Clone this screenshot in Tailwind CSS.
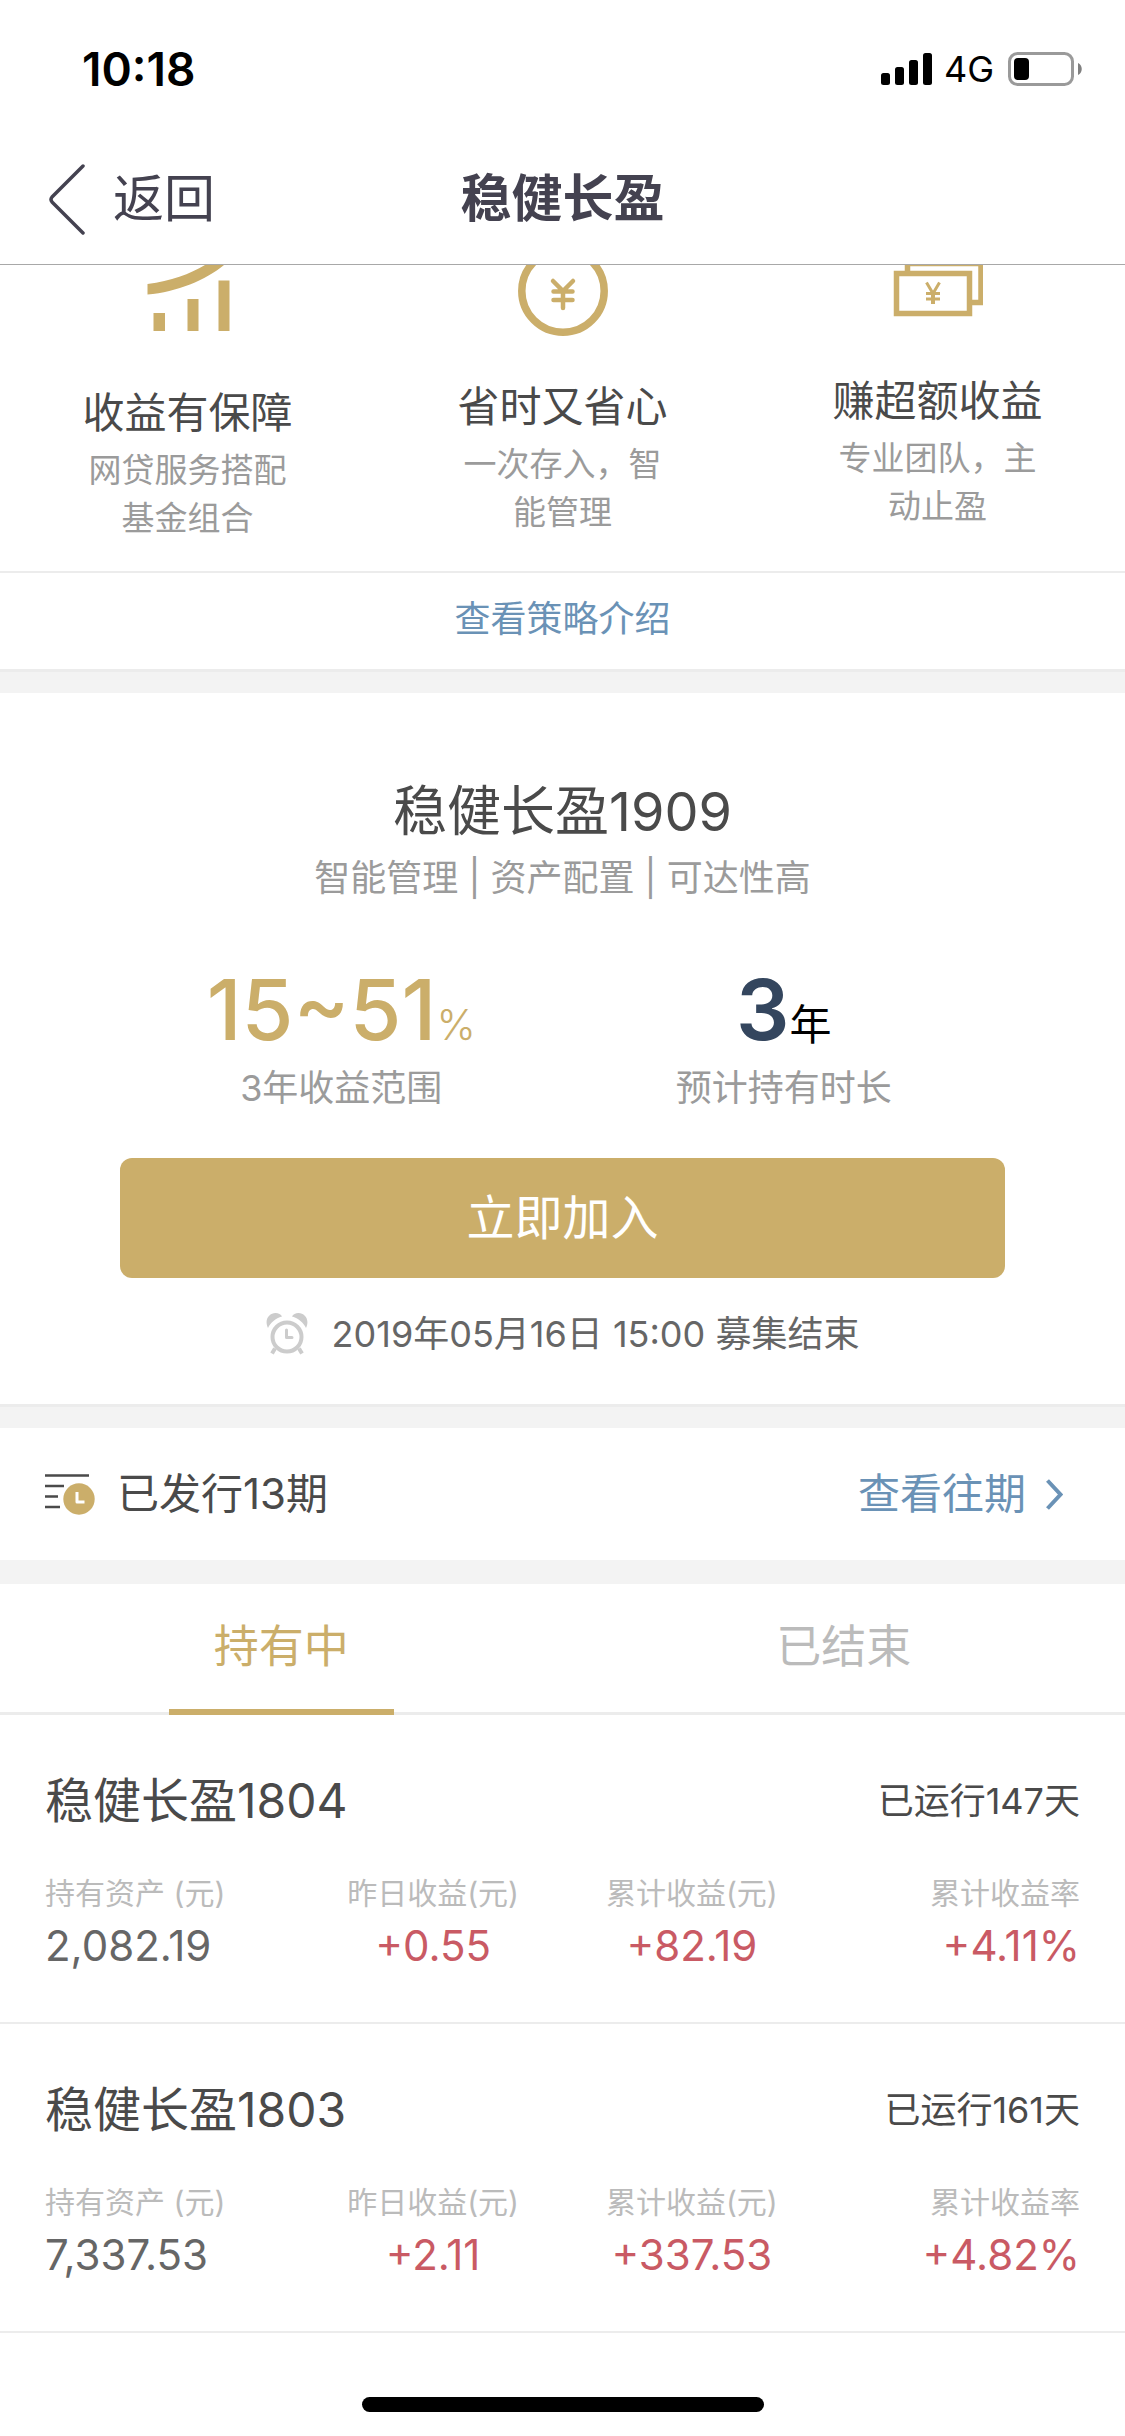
<!DOCTYPE html>
<html lang="zh-CN">
  <head>
    <meta charset="UTF-8" />
    <meta name="viewport" content="width=device-width, initial-scale=1.0" />
    <script src="https://cdn.jsdelivr.net/npm/@tailwindcss/browser@4"></script>
    <title>稳健长盈</title>
  </head>
  <body
    class="min-h-screen flex flex-col bg-white text-[#4a4a4a] font-['Inter','Noto_Sans_CJK_SC',sans-serif]"
  >
    <!-- Status bar -->
    <div class="flex items-center justify-between h-[132px] pt-1.5 pl-[82px] pr-[43px] text-black">
      <span class="text-[46px] leading-[60px] font-semibold">10:18</span>
      <div class="flex items-center">
        <svg class="w-[51px] h-8" viewBox="0 0 51 32" fill="currentColor">
          <rect x="0" y="20" width="9" height="12" rx="2.5" />
          <rect x="14" y="14" width="9" height="18" rx="2.5" />
          <rect x="28" y="7" width="9" height="25" rx="2.5" />
          <rect x="42" y="0" width="9" height="32" rx="2.5" />
        </svg>
        <span class="ml-3 text-[36px] leading-[60px]">4G</span>
        <svg class="ml-3.5 w-[74px] h-[34px]" viewBox="0 0 74 34">
          <rect x="1.5" y="1.5" width="63" height="31" rx="8" fill="none" stroke="#9a9a9a" stroke-width="3" />
          <rect x="6" y="6" width="15" height="22" rx="4" />
          <path d="M70 11c5 2 5 10 0 12z" fill="#808080" />
        </svg>
      </div>
    </div>

    <!-- Navigation bar -->
    <header
      class="grid grid-cols-3 items-center h-[133px] pt-0.5 px-12 border-b border-[#a8a8a8] text-[51px] leading-[72px] text-[#444250]"
    >
      <button type="button" class="flex items-center gap-7">
        <svg class="w-[37px] h-[71px]" viewBox="0 0 37 71" fill="none" stroke="currentColor" stroke-width="3.5" stroke-linecap="round" stroke-linejoin="round">
          <path d="M35 2 4 33q-2 2.500 0 5l31 31" />
        </svg>
        返回
      </button>
      <h1 class="text-center font-bold whitespace-nowrap">稳健长盈</h1>
    </header>

    <main>
      <!-- Selling points -->
      <section class="grid grid-cols-3 h-[308px] border-b-2 border-[#ececec] text-center">
        <div class="flex flex-col items-center">
          <svg class="w-[90px] h-[77px] mb-11" viewBox="0 0 90 77" fill="#cbae6a">
            <path d="M4.500 19C28 16 47 9 62 0h19C63 15 34 27 4.500 29.500z" />
            <path d="M10.500 48H22v18H10.500zM44.500 34h11v32h-11zM75.500 15.500h11V66h-11z" />
          </svg>
          <h2 class="text-[42px] leading-[54px] mb-1.5">收益有保障</h2>
          <p class="w-[200px] text-[33px] leading-[48px] text-[#9b9b9b]">网贷服务搭配基金组合</p>
        </div>
        <div class="flex flex-col items-center">
          <svg class="w-[90px] h-[71px] mb-11" viewBox="0 0 90 71" fill="none" stroke="#cbae6a">
            <circle cx="45" cy="26" r="41.200" stroke-width="7.500" />
            <path d="M35 16 45 26 55 16M35.500 26.500h19M35.500 35h19M45 26v17" stroke-width="4.500" stroke-linecap="round" />
          </svg>
          <h2 class="text-[42px] leading-[54px] mb-1.5">省时又省心</h2>
          <p class="w-[200px] text-[33px] leading-[48px] text-[#9b9b9b]">一次存入，智能管理</p>
        </div>
        <div class="flex flex-col items-center">
          <svg class="w-[90px] h-[65px] mb-11" viewBox="0 0 90 65" fill="none" stroke="#cbae6a">
            <path d="M3.500 8.500h73v40h-73zM14.500 6V-1.500H88V37.500H79" stroke-width="5.500" />
            <path d="m33.500 17.500 6.500 11 6.500-11M33 28.500h14M33 34h14" stroke-width="3" />
            <path d="M40 27v12" stroke-width="4" />
          </svg>
          <h2 class="text-[42px] leading-[54px] mb-1.5">赚超额收益</h2>
          <p class="w-[200px] text-[33px] leading-[48px] text-[#9b9b9b]">专业团队，主动止盈</p>
        </div>
      </section>
      <a href="#" class="block pt-4 pb-5 text-center text-[36px] leading-[60px] text-[#6a92b6]">查看策略介绍</a>
      <div class="h-6 border-t-[3px] border-[#ececec] bg-[#f3f3f3]"></div>

      <!-- Current product -->
      <section class="px-[120px] pt-[83px] pb-10 text-center">
        <h2 class="text-[54px] leading-[72px]">稳健长盈1909</h2>
        <p class="text-[36px] leading-[60px] text-[#9b9b9b]">智能管理 | 资产配置 | 可达性高</p>
        <div class="grid grid-cols-2 mt-[54px]">
          <div>
            <p class="text-[84px] leading-[96px] font-medium text-[#cbae6a]">15~51<span class="text-[42px] leading-none font-light">%</span></p>
            <p class="text-[36px] leading-[60px] text-[#9b9b9b]">3年收益范围</p>
          </div>
          <div>
            <p class="text-[84px] leading-[96px] font-semibold text-[#34465e]">3<span class="text-[42px] leading-none font-normal text-black">年</span></p>
            <p class="text-[36px] leading-[60px] text-[#9b9b9b]">预计持有时长</p>
          </div>
        </div>
        <button type="button" class="block w-full h-[120px] mt-10 rounded-xl bg-[#cbae6a] text-white text-[48px] leading-[72px]">立即加入</button>
        <p class="flex items-center justify-center gap-6 mt-[26px] text-[36px] leading-[60px] text-[#666]">
          <svg class="w-[42px] h-[42px]" viewBox="0 0 42 42" fill="none" stroke="#ccc">
            <circle cx="21" cy="24" r="14.500" stroke-width="4" />
            <path d="M20.500 17v7.500H26" stroke-width="3" stroke-linecap="round" stroke-linejoin="round" />
            <path d="m9 35.500-3 5M33 35.500l3 5" stroke-width="4" />
            <path d="M2 15C-2 7 3 0 9.500 0c3 0 5.500 1.500 6.500 3.500C9.500 5.500 4.500 9.500 2 15zM40 15C44 7 39 0 32.500 0c-3 0-5.500 1.500-6.500 3.500C32.500 5.500 37.500 9.500 40 15z" fill="#ccc" stroke="none" />
          </svg>
          2019年05月16日 15:00 募集结束
        </p>
      </section>
      <div class="h-6 border-t-[3px] border-[#ececec] bg-[#f3f3f3]"></div>

      <!-- Past issues -->
      <section class="flex items-center h-[132px] pl-[45px] pr-[62px] text-[42px] leading-[60px]">
        <svg class="w-[50px] h-[42px] mr-[22px]" viewBox="0 0 50 42" fill="none">
          <path d="M0 2.500h44M0 13h19M0 23.500h13M0 34h15" stroke="#4a4a4a" stroke-width="2.500" />
          <circle cx="34" cy="26" r="15.700" fill="#cbae6a" />
          <path d="M32 19v10h7.500" stroke="#fff" stroke-width="3" stroke-linejoin="round" />
        </svg>
        <p>已发行13期</p>
        <a href="#" class="flex items-center gap-5 ml-auto text-[#6a92b6]">
          查看往期
          <svg class="w-[17px] h-[31px]" viewBox="0 0 17 31" fill="none" stroke="currentColor" stroke-width="4">
            <path d="m1.500 1.500 13 14-13 14" />
          </svg>
        </a>
      </section>
      <div class="h-6 bg-[#f3f3f3]"></div>

      <!-- Holdings -->
      <section>
        <div role="tablist" class="grid grid-cols-2 h-[131px] border-b-[3px] border-[#ececec] text-[45px] leading-[60px]">
          <button type="button" role="tab" aria-selected="true" class="justify-self-center w-2/5 h-[131px] border-b-[6px] border-[#cbae6a] text-[#cbae6a]">持有中</button>
          <button type="button" role="tab" aria-selected="false" class="justify-self-center w-2/5 h-[131px] pb-1.5 text-[#bbb]">已结束</button>
        </div>

        <article class="px-[45px] pt-[50px] pb-[47px] border-b-2 border-[#ececec]">
          <div class="flex items-center justify-between">
            <h3 class="text-[48px] leading-[72px]">稳健长盈1804</h3>
            <p class="text-[36px] leading-[60px]">已运行147天</p>
          </div>
          <table class="w-full mt-8 table-fixed text-center">
            <thead class="text-[30px] leading-[48px] text-[#bbb]">
              <tr>
                <th class="font-normal text-left">持有资产 (元)</th>
                <th class="font-normal">昨日收益(元)</th>
                <th class="font-normal">累计收益(元)</th>
                <th class="font-normal text-right">累计收益率</th>
              </tr>
            </thead>
            <tbody class="text-[42px] leading-[58px] text-[#c95a64]">
              <tr>
                <td class="text-left text-[#666]">2,082.19</td>
                <td>+0.55</td>
                <td>+82.19</td>
                <td class="text-right">+4.11%</td>
              </tr>
            </tbody>
          </table>
        </article>

        <article class="px-[45px] pt-[50px] pb-[47px] border-b-2 border-[#ececec]">
          <div class="flex items-center justify-between">
            <h3 class="text-[48px] leading-[72px]">稳健长盈1803</h3>
            <p class="text-[36px] leading-[60px]">已运行161天</p>
          </div>
          <table class="w-full mt-8 table-fixed text-center">
            <thead class="text-[30px] leading-[48px] text-[#bbb]">
              <tr>
                <th class="font-normal text-left">持有资产 (元)</th>
                <th class="font-normal">昨日收益(元)</th>
                <th class="font-normal">累计收益(元)</th>
                <th class="font-normal text-right">累计收益率</th>
              </tr>
            </thead>
            <tbody class="text-[42px] leading-[58px] text-[#c95a64]">
              <tr>
                <td class="text-left text-[#666]">7,337.53</td>
                <td>+2.11</td>
                <td>+337.53</td>
                <td class="text-right">+4.82%</td>
              </tr>
            </tbody>
          </table>
        </article>
      </section>
    </main>

    <!-- Home indicator -->
    <div class="w-[402px] h-[15px] mt-auto mb-6 mx-auto rounded-full bg-black"></div>
  </body>
</html>
